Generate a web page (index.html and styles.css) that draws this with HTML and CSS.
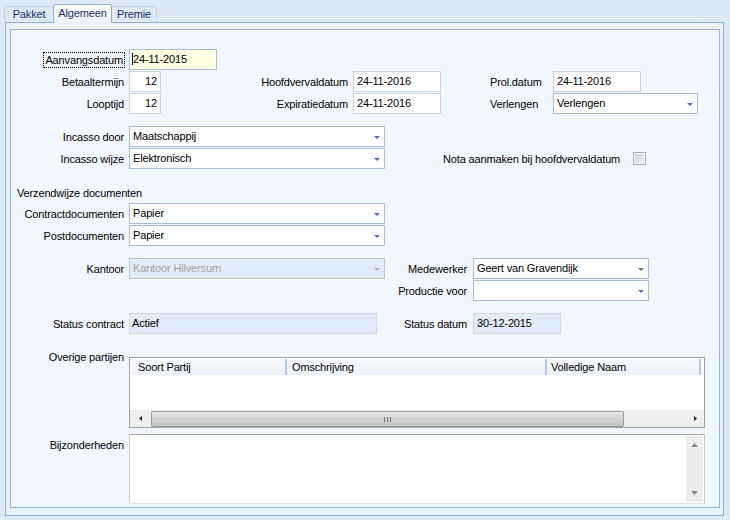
FILE: index.html
```html
<!DOCTYPE html>
<html>
<head>
<meta charset="utf-8">
<link rel="stylesheet" href="styles.css">
</head>
<body>
<div class="tabs">
  <div class="tab tab-pakket">Pakket</div>
  <div class="tab active">Algemeen</div>
  <div class="tab tab-premie">Premie</div>
</div>
<div class="panel">
  <div class="inner">
    <div class="sec sec-a">
      <div class="lbl lbl-focus"><span class="focus">Aanvangsdatum</span></div>
      <div class="fld focused span-rest"><i class="caret"></i>24-11-2015</div>

      <div class="lbl">Betaaltermijn</div>
      <div class="fld num">12</div>
      <div class="lbl">Hoofdvervaldatum</div>
      <div class="fld">24-11-2016</div>
      <div class="lbl lbl-l">Prol.datum</div>
      <div class="fld w88">24-11-2016</div>

      <div class="lbl">Looptijd</div>
      <div class="fld num">12</div>
      <div class="lbl">Expiratiedatum</div>
      <div class="fld">24-11-2016</div>
      <div class="lbl lbl-l">Verlengen</div>
      <div class="sel"><span class="v">Verlengen</span><i class="arrow"></i></div>
    </div>

    <div class="sec sec-b">
      <div class="lbl">Incasso door</div>
      <div class="sel"><span class="v">Maatschappij</span><i class="arrow"></i></div>
      <div></div>
      <div class="lbl">Incasso wijze</div>
      <div class="sel"><span class="v">Elektronisch</span><i class="arrow"></i></div>
      <div class="nota"><span class="nota-t">Nota aanmaken bij hoofdvervaldatum</span><span class="chk"></span></div>
    </div>

    <div class="heading">Verzendwijze documenten</div>
    <div class="sec sec-c">
      <div class="lbl">Contractdocumenten</div>
      <div class="sel"><span class="v">Papier</span><i class="arrow"></i></div>
      <div class="lbl">Postdocumenten</div>
      <div class="sel"><span class="v">Papier</span><i class="arrow"></i></div>
    </div>

    <div class="sec sec-d">
      <div class="lbl">Kantoor</div>
      <div class="sel dis"><span class="v">Kantoor Hilversum</span><i class="arrow"></i></div>
      <div class="lbl lbl-r6">Medewerker</div>
      <div class="sel"><span class="v">Geert van Gravendijk</span><i class="arrow"></i></div>
      <div></div>
      <div></div>
      <div class="lbl lbl-r6">Productie voor</div>
      <div class="sel"><span class="v"></span><i class="arrow"></i></div>
    </div>

    <div class="sec sec-e">
      <div class="lbl">Status contract</div>
      <div class="fld ro status">Actief</div>
      <div class="lbl lbl-r6">Status datum</div>
      <div class="fld ro">30-12-2015</div>
    </div>

    <div class="row-f">
      <div class="lbl lbl-top">Overige partijen</div>
      <div class="table">
        <div class="thead">
          <div class="th c1">Soort Partij</div>
          <div class="th c2">Omschrijving</div>
          <div class="th c3">Volledige Naam</div>
        </div>
        <div class="tbody"></div>
        <div class="hscroll">
          <div class="hbtn"><svg width="3" height="5" viewBox="0 0 3 5"><path d="M3 0 L0 2.5 L3 5Z" fill="#222"/></svg></div>
          <div class="thumb"><span class="grip"><i></i><i></i><i></i></span></div>
          <div class="htrack"></div>
          <div class="hbtn right"><svg width="3" height="5" viewBox="0 0 3 5"><path d="M0 0 L3 2.5 L0 5Z" fill="#222"/></svg></div>
        </div>
      </div>
    </div>

    <div class="row-g">
      <div class="lbl lbl-memo">Bijzonderheden</div>
      <div class="memo">
        <div class="vscroll">
          <svg width="7" height="4" viewBox="0 0 7 4"><path d="M0 4 L3.5 0 L7 4Z" fill="#8c8c8c"/></svg>
          <svg width="7" height="4" viewBox="0 0 7 4"><path d="M0 0 L3.5 4 L7 0Z" fill="#8c8c8c"/></svg>
        </div>
      </div>
    </div>
  </div>
</div>
</body>
</html>
```
FILE: styles.css
```css
* { box-sizing: border-box; }
html, body { margin: 0; }
body {
  width: 730px;
  height: 520px;
  overflow: hidden;
  background: #dfe9f5;
  font-family: "Liberation Sans", Arial, sans-serif;
  font-size: 11px;
  letter-spacing: -0.15px;
  color: #000;
}

/* tabs */
.tabs {
  display: flex;
  align-items: flex-end;
  height: 22px;
  padding-left: 4px;
}
.tab {
  height: 16px;
  border: 1px solid #c6d6ec;
  border-bottom: none;
  border-radius: 3px 3px 0 0;
  color: #16316a;
  line-height: 15px;
  text-align: center;
}
.tab-pakket { width: 49px; border-right: none; }
.tab-premie { width: 45px; border-left: none; }
.tab.active {
  width: 59px;
  height: 19px;
  margin-bottom: -1px;
  position: relative;
  z-index: 1;
  background: linear-gradient(#fdfeff, #edf3fc);
  border-color: #8db0dd;
  line-height: 16px;
}

/* panel */
.panel {
  margin-left: 5px;
  width: 719px;
  height: 494px;
  border: 1px solid #8fb1dc;
  background: #eaf1fb;
  padding: 6px 3px 7px 4px;
}
.inner {
  height: 100%;
  border: 1px solid #96b5de;
  background: #f2f7fe;
  padding-top: 19px;
}

/* sections */
.sec {
  display: grid;
  grid-auto-rows: 21px;
  row-gap: 1px;
}
.sec-a { grid-template-columns: 118px 88px 136px 88px 112px 145px; }
.sec-b { margin-top: 12px; grid-template-columns: 118px 256px 1fr; }
.sec-c { margin-top: 3px; grid-template-columns: 118px 256px; }
.sec-d { margin-top: 12px; grid-template-columns: 118px 256px 88px 176px; }
.sec-e { margin-top: 12px; grid-template-columns: 118px 256px 88px 88px; }

.heading {
  margin-top: 17px;
  padding-left: 6px;
  height: 14px;
  line-height: 14px;
}

.lbl {
  display: flex;
  align-items: center;
  justify-content: flex-end;
  padding-right: 5px;
  white-space: nowrap;
}
.lbl-l { justify-content: flex-start; padding-left: 49px; padding-right: 0; }
.lbl-r6 { padding-right: 6px; }
.lbl-focus { padding-right: 4px; }
.focus {
  display: inline-block;
  border: 1px dotted #000;
  line-height: 14px;
  padding: 0 1px 0 1px;
}

/* fields */
.fld {
  border: 1px solid #ccd5df;
  background: #fff;
  padding: 0 3px;
  line-height: 19px;
  white-space: nowrap;
  overflow: hidden;
}
.fld.num { width: 32px; text-align: right; }
.w88 { width: 88px; }
.span-rest { grid-column: 2 / span 5; width: 88px; }
.fld.focused { background: #ffffe1; border-color: #a6bedd; padding-left: 2px; }
.caret {
  display: inline-block;
  width: 1px;
  height: 12px;
  background: #000;
  vertical-align: -2px;
  margin-right: 0;
}
.fld.ro { background: #e1ebfa; border-color: #d3d9e1; }
.fld.status { width: 248px; padding-left: 2px; }

.sel {
  display: flex;
  align-items: center;
  border: 1px solid #a6bedc;
  background: #fff;
  padding: 0 4px 0 3px;
  white-space: nowrap;
}
.sel .v { flex: 1; line-height: 19px; }
.arrow {
  width: 0;
  height: 0;
  border-left: 3px solid transparent;
  border-right: 3px solid transparent;
  border-top: 3px solid #5070ab;
  margin-top: 1px;
}
.sel.dis { border-color: #c8c5b8; background: #e1ebf9; color: #a3a3a3; }
.sel.dis .arrow { border-top-color: #caa9bb; }

/* checkbox row */
.nota {
  display: flex;
  align-items: center;
  padding-left: 58px;
  white-space: nowrap;
}
.nota-t { width: 190px; }
.chk {
  width: 13px;
  height: 13px;
  border: 1px solid #9bb1d0;
  background: linear-gradient(135deg, #cfcfcf, #f3f3f3);
  box-shadow: inset 0 0 0 1px #f5f5f5;
}

/* grid */
.row-f { display: flex; margin-top: 23px; }
.lbl-top {
  width: 118px;
  height: 14px;
  margin-top: -7px;
  align-items: flex-start;
  line-height: 14px;
}
.table {
  width: 576px;
  height: 71px;
  border: 1px solid #a3a3a3;
  background: #fff;
  display: flex;
  flex-direction: column;
}
.thead {
  display: flex;
  height: 16px;
  margin: 1px 0 0 1px;
}
.th {
  background: linear-gradient(#f7f9fd, #eef3fb);
  border-right: 2px solid #b3c8e5;
  line-height: 16px;
  padding-left: 5px;
  white-space: nowrap;
}
.th.c1 { width: 156px; padding-left: 7px; }
.th.c2 { width: 260px; }
.th.c3 { width: 154px; padding-left: 4px; }
.tbody { flex: 1; }
.hscroll {
  height: 17px;
  display: flex;
  background: #efefef;
}
.hbtn {
  width: 20px;
  display: flex;
  align-items: center;
  justify-content: center;
  padding-left: 1px;
}
.hbtn.right { width: 17px; padding-left: 0; }
.thumb {
  width: 473px;
  margin: 1px 0 0 1px;
  border: 1px solid #9a9a9a;
  border-radius: 2px;
  background: linear-gradient(#e9e9e9, #d2d2d2 50%, #c6c6c6);
  display: flex;
  align-items: center;
  justify-content: center;
}
.grip { display: flex; gap: 2px; }
.grip i { display: block; width: 1px; height: 5px; background: #6e6e6e; }
.htrack { flex: 1; }

/* memo */
.row-g { display: flex; margin-top: 6px; }
.lbl-memo {
  width: 118px;
  align-items: flex-start;
  padding-top: 4px;
  line-height: 14px;
}
.memo {
  width: 576px;
  height: 70px;
  border: 1px solid #cacaca;
  border-top-color: #a8a8a8;
  border-bottom-color: #e2e2e2;
  background: #fff;
  display: flex;
  justify-content: flex-end;
  padding: 1px;
}
.vscroll {
  width: 17px;
  background: #ededed;
  display: flex;
  flex-direction: column;
  justify-content: space-between;
  align-items: center;
  padding: 7px 0 7px;
}
```
